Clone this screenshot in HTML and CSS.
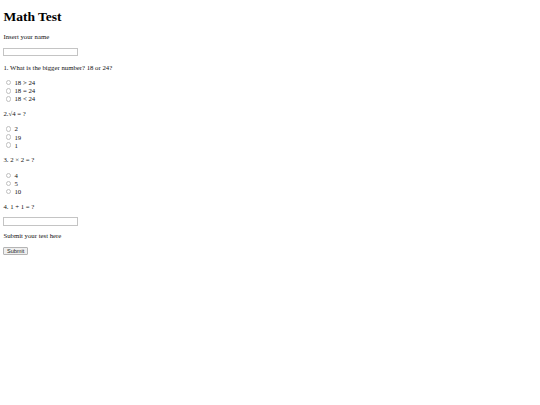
FILE: index.html
```html
<!DOCTYPE html>
<html>
<head>
<meta charset="utf-8">
<title>Math Test</title>
<link rel="stylesheet" href="styles.css">
</head>
<body class="page">
<h1 class="title">Math Test</h1>
<p class="text">Insert your name</p>
<input class="field" type="text">
<p class="text">1. What is the bigger number? 18 or 24?</p>
<div class="options">
  <label class="option"><input class="radio" type="radio" name="q1"><span>18 &gt; 24</span></label>
  <label class="option"><input class="radio" type="radio" name="q1"><span>18 = 24</span></label>
  <label class="option"><input class="radio" type="radio" name="q1"><span>18 &lt; 24</span></label>
</div>
<p class="text">2.√4 = ?</p>
<div class="options">
  <label class="option"><input class="radio" type="radio" name="q2"><span>2</span></label>
  <label class="option"><input class="radio" type="radio" name="q2"><span>19</span></label>
  <label class="option"><input class="radio" type="radio" name="q2"><span>1</span></label>
</div>
<p class="text">3. 2 × 2 = ?</p>
<div class="options">
  <label class="option"><input class="radio" type="radio" name="q3"><span>4</span></label>
  <label class="option"><input class="radio" type="radio" name="q3"><span>5</span></label>
  <label class="option"><input class="radio" type="radio" name="q3"><span>10</span></label>
</div>
<p class="text">4. 1 + 1 = ?</p>
<input class="field" type="text">
<p class="text text-late">Submit your test here</p>
<button class="submit" type="button">Submit</button>
</body>
</html>
```
FILE: styles.css
```css
html {
  background: #ffffff;
}

.page {
  margin: 3.4px;
  font-family: "Liberation Serif", "Times New Roman", serif;
  font-size: 6.75px;
  color: #111111;
}

.title {
  font-size: 13.5px;
  font-weight: bold;
  margin: 6px 0 8px;
  line-height: normal;
  color: #000000;
}

.text {
  margin: 7.5px 0;
  line-height: normal;
}

.field {
  display: block;
  box-sizing: border-box;
  width: 74.4px;
  height: 8.4px;
  margin: 0;
  padding: 0;
  border: 1px solid #c4c4c4;
  background: #ffffff;
}

.text-late {
  margin-top: 6.5px;
}

.options {
  display: flex;
  flex-direction: column;
}

.option {
  display: flex;
  align-items: flex-end;
  height: 8.1px;
  line-height: 7.2px;
}

.radio {
  appearance: none;
  -webkit-appearance: none;
  box-sizing: border-box;
  width: 5.5px;
  height: 5.5px;
  margin: 0 3px 0.9px 2.6px;
  padding: 0;
  border: 1px solid #c0c0c0;
  border-radius: 50%;
  background: #ffffff;
  flex: none;
}

.submit {
  display: block;
  box-sizing: border-box;
  width: 24.5px;
  height: 8px;
  margin: 7px 0 0;
  padding: 0;
  border: 1px solid #b4b4b4;
  border-radius: 1px;
  background: #efefef;
  font-family: "Liberation Sans", Arial, sans-serif;
  font-size: 5.6px;
  line-height: 6px;
  color: #222222;
}
```
